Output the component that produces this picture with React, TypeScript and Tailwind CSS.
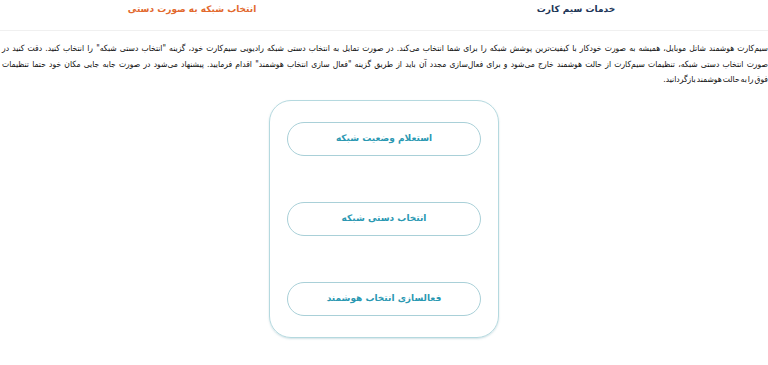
export default function App() {
  const actions = ["استعلام وضعیت شبکه", "انتخاب دستی شبکه", "فعالسازی انتخاب هوشمند"];

  return (
    <div dir="rtl" className="min-h-screen bg-white text-[#333] font-['DejaVu_Sans',sans-serif] overflow-hidden">
      {/* Tabs */}
      <header className="flex h-[31px] border-b border-[#f0f0f0]">
        <div className="flex-1 flex justify-center pt-[3px] text-[9px] leading-[12px] font-bold text-[#1d3557]">
          خدمات سیم کارت
        </div>
        <div className="flex-1 flex justify-center pt-[3px] text-[9px] leading-[12px] font-bold text-[#e2692e]">
          انتخاب شبکه به صورت دستی
        </div>
      </header>

      {/* Description */}
      <div className="mt-[10px] pl-[2px] text-[8.5px] leading-[15.5px] text-[#111] font-['DejaVu_Sans_Condensed','DejaVu_Sans',sans-serif] [word-spacing:-1.5px]">
        <p className="[text-align-last:justify]">
          سیم‌کارت هوشمند شاتل موبایل، همیشه به صورت خودکار با کیفیت‌ترین پوشش شبکه را برای شما انتخاب می‌کند. در صورت تمایل به انتخاب دستی شبکه رادیویی سیم‌کارت خود، گزینه "انتخاب دستی شبکه" را انتخاب کنید. دقت کنید در
        </p>
        <p className="[text-align-last:justify]">
          صورت انتخاب دستی شبکه، تنظیمات سیم‌کارت از حالت هوشمند خارج می‌شود و برای فعال‌سازی مجدد آن باید از طریق گزینه "فعال سازی انتخاب هوشمند" اقدام فرمایید. پیشنهاد می‌شود در صورت جابه جایی مکان خود حتما تنظیمات
        </p>
        <p>فوق را به حالت هوشمند بازگردانید.</p>
      </div>

      {/* Actions card */}
      <div className="flex justify-center mt-[12px]">
        <div className="w-[230px] h-[238px] border border-[#b5d9df] rounded-[22px] shadow-[0_1px_2px_rgba(120,170,180,0.35)] pt-[21px] px-[17px] flex flex-col gap-[46px]">
          {actions.map((label) => (
            <button
              key={label}
              className="h-[34px] w-full rounded-full border border-[#a9d0d8] bg-white text-[9px] font-bold text-[#2a98b2]"
            >
              {label}
            </button>
          ))}
        </div>
      </div>
    </div>
  );
}
